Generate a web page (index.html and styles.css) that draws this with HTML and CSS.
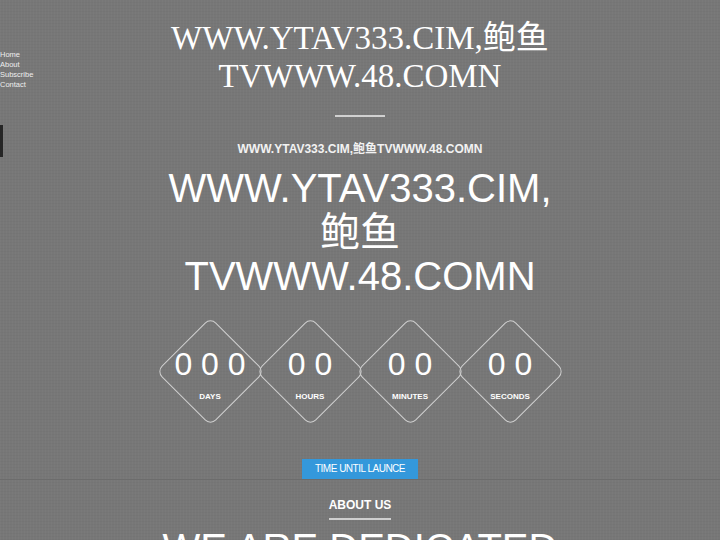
FILE: index.html
```html
<!DOCTYPE html>
<html lang="zh">
<head>
<meta charset="utf-8">
<title>WWW.YTAV333.CIM,鲍鱼TVWWW.48.COMN</title>
<link rel="stylesheet" href="styles.css">
</head>
<body>
<nav class="side-nav">
  <a href="#">Home</a>
  <a href="#">About</a>
  <a href="#">Subscribe</a>
  <a href="#">Contact</a>
</nav>
<div class="side-tab"></div>
<header class="hero">
  <h1 class="site-title">WWW.YTAV333.CIM,鲍鱼<br>TVWWW.48.COMN</h1>
  <div class="divider"></div>
  <p class="subtitle">WWW.YTAV333.CIM,鲍鱼TVWWW.48.COMN</p>
  <h2 class="big-title">WWW.YTAV333.CIM,<br>鲍鱼<br>TVWWW.48.COMN</h2>
  <div class="countdown">
    <div class="cell"><span class="num">0 0 0</span><span class="label">DAYS</span></div>
    <div class="cell"><span class="num">0 0</span><span class="label">HOURS</span></div>
    <div class="cell"><span class="num">0 0</span><span class="label">MINUTES</span></div>
    <div class="cell"><span class="num">0 0</span><span class="label">SECONDS</span></div>
  </div>
  <a class="launch-btn" href="#">TIME UNTIL LAUNCE</a>
</header>
<section class="about">
  <h3 class="about-title">ABOUT US</h3>
  <h2 class="about-big">WE ARE DEDICATED</h2>
</section>
</body>
</html>
```
FILE: styles.css
```css
html, body {
  margin: 0;
  padding: 0;
}
body {
  background-color: #777777;
  background-image:
    repeating-linear-gradient(0deg, rgba(0,0,0,0.025) 0 1px, transparent 1px 3px),
    repeating-linear-gradient(90deg, rgba(255,255,255,0.025) 0 1px, transparent 1px 3px);
  color: #ffffff;
  font-family: "Liberation Sans", Arial, "Noto Sans CJK SC", sans-serif;
  height: 540px;
  overflow: hidden;
}
.side-nav {
  position: absolute;
  left: 0;
  top: 50px;
  display: flex;
  flex-direction: column;
}
.side-nav a {
  color: #eeeeee;
  text-decoration: none;
  font-size: 7.5px;
  line-height: 10px;
}
.side-tab {
  position: absolute;
  left: 0;
  top: 125px;
  width: 3px;
  height: 32px;
  background: #262626;
}
.hero {
  display: flex;
  flex-direction: column;
  align-items: center;
  padding-top: 19px;
  border-bottom: 1px solid #6c6c6c;
}
.site-title {
  margin: 0;
  font-family: "Liberation Serif", "Times New Roman", "Noto Sans CJK SC", serif;
  font-weight: normal;
  font-size: 33px;
  line-height: 38px;
  text-align: center;
}
.divider {
  width: 50px;
  height: 2px;
  background: #d0d0d0;
  margin-top: 20px;
}
.subtitle {
  margin: 24px 0 0;
  font-size: 12px;
  line-height: 16px;
  font-weight: bold;
  color: #f2f2f2;
}
.big-title {
  margin: 9px 0 0;
  font-weight: normal;
  font-size: 40px;
  line-height: 44px;
  text-align: center;
}
.countdown {
  display: flex;
  margin-top: 22px;
}
.cell {
  position: relative;
  width: 100px;
  height: 101px;
  display: flex;
  flex-direction: column;
  align-items: center;
}
.cell::before {
  content: "";
  position: absolute;
  left: 12px;
  top: 12.5px;
  width: 75px;
  height: 75px;
  border: 1px solid #cfcfcf;
  border-radius: 8px;
  transform: rotate(45deg);
}
.num {
  margin-top: 26px;
  font-size: 32px;
  line-height: 36px;
  color: #ffffff;
}
.label {
  margin-top: 10px;
  font-size: 8px;
  line-height: 10px;
  font-weight: bold;
}
.launch-btn {
  margin-top: 38px;
  background: #3498db;
  color: #ffffff;
  text-decoration: none;
  font-size: 10px;
  letter-spacing: -0.5px;
  line-height: 20px;
  padding: 0 13px;
  white-space: nowrap;
}
.about {
  display: flex;
  flex-direction: column;
  align-items: center;
}
.about-title {
  margin: 17px 0 0;
  font-size: 12px;
  line-height: 16px;
  font-weight: bold;
  padding-bottom: 5px;
  border-bottom: 2px solid #cfcfcf;
}
.about-big {
  margin: 6px 0 0;
  font-weight: normal;
  font-size: 40px;
  line-height: 44px;
}
```
